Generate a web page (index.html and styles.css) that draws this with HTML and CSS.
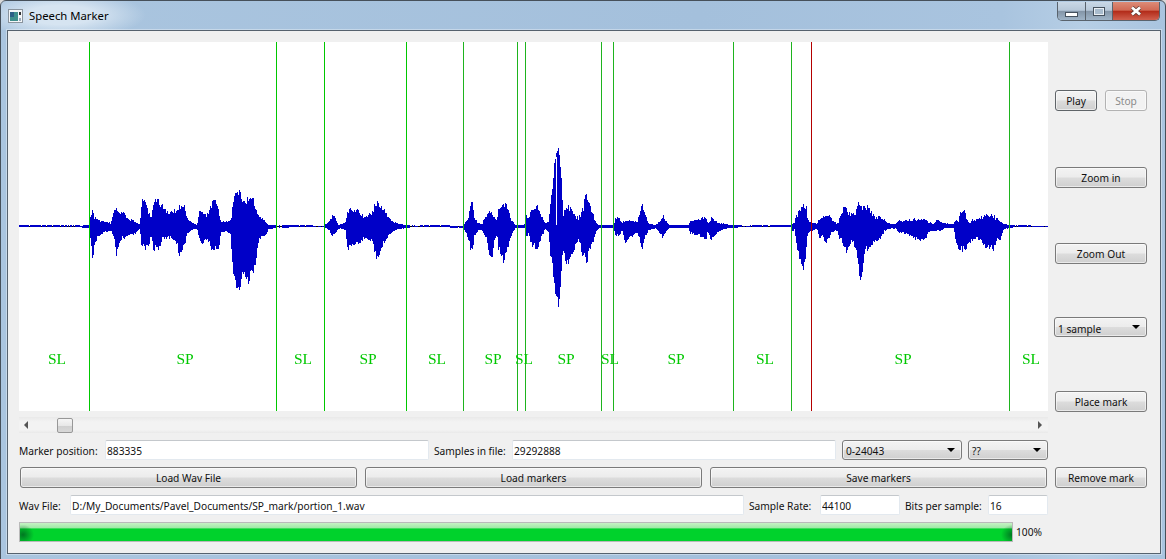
FILE: index.html
```html
<!DOCTYPE html>
<html lang="en">
<head>
    <meta charset="UTF-8">
    <title>Speech Marker</title>
    <link rel="stylesheet" href="styles.css">
</head>
<body>
    <div class="window">
        <div class="titlebar">
            <svg class="app-icon" width="15" height="14" viewBox="0 0 15 14">
                <rect x="0.5" y="0.5" width="14" height="13" fill="#f4f6f8" stroke="#8a949e"/>
                <rect x="2" y="3" width="8" height="9" fill="#3f8f8c"/>
                <rect x="2" y="3" width="4" height="5" fill="#2c5f86"/>
                <rect x="11" y="3" width="2" height="3" fill="#333"/>
                <rect x="11" y="9" width="2" height="3" fill="#9ab"/>
            </svg>
            <span class="title">Speech Marker</span>
            <div class="caption-buttons">
                <div class="cap cap-min"><span class="glyph-min"></span></div>
                <div class="cap cap-max"><span class="glyph-max"></span></div>
                <div class="cap cap-close">
                    <svg width="12" height="10" viewBox="0 0 12 10">
                        <path d="M2 1.5 L10 8.5 M10 1.5 L2 8.5" stroke="#5a3a34" stroke-width="4.2" fill="none"/>
                        <path d="M2 1.5 L10 8.5 M10 1.5 L2 8.5" stroke="#ffffff" stroke-width="2.8" fill="none"/>
                    </svg>
                </div>
            </div>
        </div>

        <div class="client">
            <div class="main">
                <div class="plot" id="plot">
                    <canvas id="wave" width="1029" height="369"></canvas>
                </div>

                <div class="scrollbar">
                    <div class="arrow arrow-left"></div>
                    <div class="thumb"></div>
                    <div class="arrow arrow-right"></div>
                </div>

                <div class="row row-fields">
                    <label class="lbl w-marker">Marker position:</label>
                    <input class="field w-324" type="text" value="883335">
                    <label class="lbl w-samples">Samples in file:</label>
                    <input class="field w-324" type="text" value="29292888">
                    <div class="btn combo w-range">0-24043</div>
                    <div class="btn combo w-qq">??</div>
                </div>

                <div class="row row-buttons">
                    <button class="btn wide">Load Wav File</button>
                    <button class="btn wide">Load markers</button>
                    <button class="btn wide">Save markers</button>
                </div>

                <div class="row row-fields">
                    <label class="lbl w-wav">Wav File:</label>
                    <input class="field w-path" type="text" value="D:/My_Documents/Pavel_Documents/SP_mark/portion_1.wav">
                    <label class="lbl w-rate">Sample Rate:</label>
                    <input class="field w-80" type="text" value="44100">
                    <label class="lbl w-bits">Bits per sample:</label>
                    <input class="field w-60" type="text" value="16">
                </div>

                <div class="row progress-row">
                    <div class="progress"></div>
                    <span class="percent">100%</span>
                </div>
            </div>

            <div class="side">
                <div class="play-stop">
                    <button class="btn play">Play</button>
                    <button class="btn stop" disabled>Stop</button>
                </div>
                <button class="btn zoom-in">Zoom in</button>
                <button class="btn zoom-out">Zoom Out</button>
                <div class="btn combo samples-combo">1 sample</div>
                <button class="btn place">Place mark</button>
                <button class="btn remove">Remove mark</button>
            </div>
        </div>
    </div>

    <script src="wave.js"></script>
</body>
</html>
```

FILE: styles.css
```css
* {
    box-sizing: border-box;
}
html, body {
    margin: 0;
    height: 100%;
    overflow: hidden;
    background-color: #d8d8d8;
}
body {
    font-family: "Noto Sans", "Liberation Sans", sans-serif;
    font-size: 10.2px;
    color: #111;
}
.window {
    width: 1166px;
    height: 562px;
    border: 1px solid #46505a;
    border-radius: 6px 6px 0 0;
    background: linear-gradient(90deg, #aac5df 0%, #a4c0dc 60%, #a9c4df 86%, #b6cee5 93%, #a9c4df 100%);
}

/* title bar */
.titlebar {
    height: 29px;
    display: flex;
    align-items: flex-start;
    background: radial-gradient(ellipse 85px 24px at 60px 14px, #d6e4f1 40%, rgba(214, 228, 241, 0) 100%);
}
.app-icon {
    margin: 8px 0 0 7px;
}
.title {
    margin: 7px 0 0 6px;
    font-size: 11.3px;
    line-height: 16px;
    color: #000;
}
.caption-buttons {
    display: flex;
    height: 19px;
    margin-left: auto;
    margin-right: 5px;
    margin-top: 1px;
    border: 1px solid #59636d;
    border-top: none;
    border-radius: 0 0 5px 5px;
    overflow: hidden;
    width: 103px;
}
.cap {
    display: flex;
    align-items: center;
    justify-content: center;
}
.cap-min, .cap-max {
    width: 28px;
    border-right: 1px solid #59636d;
    background: linear-gradient(#c9d8e6 0%, #b7c8d9 46%, #8496a8 52%, #9fb4c7 100%);
}
.cap-max {
    width: 27px;
}
.cap-close {
    flex: 1;
    background: linear-gradient(#dc8c78 0%, #d16a55 45%, #b32c1a 52%, #d0604e 100%);
}
.glyph-min {
    display: block;
    width: 13px;
    height: 5px;
    margin-top: 7px;
    background: #fff;
    border: 1px solid #46525e;
}
.glyph-max {
    display: block;
    width: 12px;
    height: 9px;
    border: 1px solid #46525e;
    outline: 1px solid rgba(255, 255, 255, 0.75);
    outline-offset: -2px;
    background: #a9bccd;
}

/* client area */
.client {
    width: 1154px;
    height: 524px;
    margin-left: 6px;
    padding: 11px 0 0 11px;
    display: flex;
    background-color: #f0f0f0;
    border: 1px solid #56626e;
    box-shadow: 0 0 0 1px rgba(255, 255, 255, 0.35);
}
.main {
    width: 1029px;
}
.plot {
    position: relative;
    width: 1029px;
    height: 369px;
    background-color: #fff;
}
#wave {
    display: block;
}
.mark-label {
    position: absolute;
    top: 307px;
    font-family: "Liberation Serif", "Times New Roman", serif;
    font-size: 15.5px;
    line-height: 20px;
    color: #00c800;
    transform: translateX(-50%);
}

/* scrollbar under the plot */
.scrollbar {
    height: 16px;
    margin-top: 6px;
    display: flex;
    align-items: center;
    background: linear-gradient(#e9e9e9, #f3f3f3 30%, #f3f3f3 80%, #e9e9e9);
}
.arrow {
    width: 0;
    height: 0;
    border-top: 4px solid transparent;
    border-bottom: 4px solid transparent;
}
.arrow-left {
    margin-left: 5px;
    border-right: 4px solid #555;
}
.arrow-right {
    margin-left: auto;
    margin-right: 6px;
    border-left: 4px solid #555;
}
.thumb {
    width: 16px;
    height: 15px;
    margin: 1px 0 0 29px;
    border: 1px solid #989898;
    border-radius: 2px;
    background: linear-gradient(#f6f6f6, #e8e8e8 50%, #d0d0d0 52%, #d8d8d8);
}

/* form rows */
.row {
    display: flex;
    align-items: center;
    margin-top: 7px;
}
.row-fields {
    height: 20px;
}
.row-buttons {
    height: 21px;
    gap: 8px;
    padding: 0 1px;
}
.lbl {
    flex: none;
    padding-top: 1px;
    white-space: nowrap;
}
.field {
    flex: none;
    height: 20px;
    padding: 1px 1px 0;
    font: inherit;
    color: #111;
    background-color: #fff;
    border: 1px solid #e3e9ef;
    border-top-color: #c4c8cc;
    border-radius: 2px;
    outline: none;
}
.w-marker { width: 86px; }
.w-samples { width: 78px; margin-left: 5px; }
.w-wav { width: 51px; }
.w-rate { width: 71px; margin-left: 5px; }
.w-bits { width: 83px; margin-left: 5px; }
.w-324 { width: 324px; }
.w-path { width: 674px; }
.w-80 { width: 80px; }
.w-60 { width: 60px; }

.btn {
    display: block;
    height: 21px;
    padding: 1px 0 0;
    font: inherit;
    line-height: 18px;
    color: #111;
    text-align: center;
    border: 1px solid #7a7a7a;
    border-radius: 3px;
    background: linear-gradient(#f3f3f3 0%, #ececec 48%, #dcdcdc 52%, #cfcfcf 100%);
    box-shadow: inset 0 0 0 1px rgba(255, 255, 255, 0.55);
}
.wide {
    flex: 1;
}
.combo {
    position: relative;
    height: 20px;
    padding-left: 3px;
    line-height: 18px;
    text-align: left;
}
.combo::after {
    content: "";
    position: absolute;
    top: 7px;
    right: 6px;
    border-top: 4px solid #000;
    border-left: 4px solid transparent;
    border-right: 4px solid transparent;
}
.w-range {
    width: 120px;
    margin-left: 6px;
}
.w-qq {
    width: 80px;
    margin-left: 6px;
}

/* progress */
.progress-row {
    height: 20px;
}
.progress {
    width: 994px;
    height: 20px;
    border: 1px solid #b9b9b9;
    background:
        radial-gradient(ellipse 11px 10px at 3px 65%, rgba(0, 80, 30, 0.7), transparent),
        radial-gradient(ellipse 11px 10px at 100% 65%, rgba(0, 80, 30, 0.7), transparent),
        linear-gradient(#c6f2c4 0%, #9fe9a6 27%, #00d22c 33%, #00d22c 100%);
}
.percent {
    margin-left: 3px;
}

/* right hand buttons */
.side {
    width: 92px;
    margin-left: 7px;
    padding-top: 48px;
    display: flex;
    flex-direction: column;
    gap: 54px;
}
.play-stop {
    display: flex;
    justify-content: space-between;
}
.play, .stop {
    width: 42px;
}
.play {
    border-color: #5f6468;
}
.stop {
    color: #8a8a8a;
    border-color: #b2b2b2;
    background: #f2f2f2;
}
.zoom-in { margin-top: 2px; }
.zoom-out { margin-top: 1px; }
.samples-combo { margin-top: -1px; margin-left: -1px; width: 93px; line-height: 20px; }
.remove { margin-top: 1px; }
```

FILE: wave.js
```js
// Plot origin in the window
const ORIGIN_X = 19;
const ORIGIN_Y = 42;

const MARKERS = [
    [89, '#00c800'], [276, '#00c800'], [324, '#00c800'], [406, '#00c800'],
    [463, '#1eb41e'], [517, '#1eb41e'], [525, '#1eb41e'], [601, '#1eb41e'],
    [613, '#1eb41e'], [733, '#1eb41e'], [791, '#1eb41e'], [811, '#b40000'],
    [1009, '#1eb41e']
];

const LABELS = [
    ['SL', 57], ['SP', 185], ['SL', 303], ['SP', 368], ['SL', 437], ['SP', 493], ['SL', 524],
    ['SP', 566], ['SL', 610], ['SP', 676], ['SL', 765], ['SP', 903], ['SL', 1031]
];

// Envelope of the speech parts: x, top, bottom, read off at 3x scale.
// Each part has its own x/y start.
const PARTS = [
    { x: 80, y: 170, points: [
        [0,167,172],[28,165,175],[30,143,205],[36,118,268],[42,140,232],[50,147,205],[60,152,195],
        [80,155,185],[92,160,182],[95,140,190],[102,122,215],[108,120,255],[115,128,230],[125,122,205],
        [135,138,205],[150,148,195],[165,155,190],[178,163,178],[184,92,235],[194,92,235],[198,110,235],
        [205,125,225],[212,145,200],[218,105,235],[228,90,240],[235,92,245],[245,105,210],[258,128,205],
        [275,125,205],[290,118,225],[296,105,255],[305,105,240],[313,110,225],[320,145,190],[335,158,180],
        [350,165,175],[358,120,210],[365,122,235],[375,135,205],[385,130,215],[395,95,245],[405,93,240],
        [415,120,240],[422,155,185],[440,155,185],[450,150,190],[458,105,305],[464,70,340],[470,60,355],
        [477,65,365],[485,90,310],[495,95,320],[505,80,338],[513,90,300],[520,90,305],[528,110,275],
        [535,140,210],[545,145,200],[555,155,195],[565,165,178],[590,165,173],[733,167,171],[735,163,175],
        [745,155,180],[758,135,200],[765,145,190],[775,165,175],[795,158,180],[802,120,235],[815,115,235],
        [830,118,225],[840,135,215],[855,140,205],[875,125,210],[882,108,240],[890,97,268],[900,105,240],
        [915,125,210],[930,150,190],[950,160,178],[975,165,175],[990,166,172],[1020,167,171]
    ] },
    { x: 450, y: 140, points: [
        [0,257,263],[38,257,263],[45,245,275],[55,230,300],[60,190,330],[66,190,335],[72,235,290],
        [85,250,270],[95,252,270],[100,238,285],[108,230,290],[115,215,350],[125,210,362],[132,230,300],
        [140,245,280],[143,205,320],[155,195,350],[158,187,370],[165,195,350],[175,205,320],[183,240,285],
        [195,255,265],[202,255,263],[225,253,265],[228,225,295],[235,235,280],[242,205,315],[250,205,320],
        [262,200,322],[270,220,300],[285,250,268],[295,245,275],[300,185,350],[306,150,375],[312,75,440],
        [316,50,465],[322,30,485],[326,28,503],[332,95,405],[338,230,330],[345,200,365],[355,197,375],
        [365,215,345],[375,230,320],[385,235,300],[398,205,350],[405,165,350],[408,155,378],[415,180,340],
        [425,215,315],[435,245,280],[445,255,265],[490,255,263],[495,235,285],[505,233,290],[515,250,270],
        [525,235,315],[535,240,295],[550,240,285],[560,250,275],[570,205,305],[576,190,325],[582,215,295],
        [595,250,270],[615,255,265],[628,245,280],[638,225,292],[645,240,280],[655,255,265],[715,255,265],
        [720,240,280],[740,238,285],[760,230,295],[767,228,298],[772,250,272],[782,235,298],[790,238,292],
        [805,248,275],[830,253,265],[850,256,263],[900,257,261]
    ] },
    { x: 780, y: 190, points: [
        [0,106,112],[30,105,112],[36,100,125],[42,100,120],[46,70,150],[50,88,180],[55,60,195],[65,52,225],
        [68,48,242],[72,50,220],[78,50,180],[82,90,130],[95,98,125],[110,100,118],[118,85,150],[125,85,135],
        [135,72,160],[145,72,145],[155,90,125],[170,100,120],[175,95,145],[182,70,150],[190,52,165],[197,52,187],
        [205,68,175],[215,72,150],[225,70,175],[232,45,210],[238,33,278],[245,45,245],[255,45,180],[265,52,180],
        [275,70,160],[285,80,155],[300,80,150],[312,85,125],[320,100,118],[345,102,115],[355,92,130],[370,92,130],
        [385,90,135],[400,88,145],[415,85,150],[425,90,150],[437,90,145],[445,98,125],[460,100,125],[470,90,120],
        [478,95,125],[490,100,115],[520,102,115],[527,80,165],[535,88,175],[543,60,178],[552,65,180],[565,95,165],
        [575,90,150],[590,90,145],[605,80,155],[615,72,170],[630,75,175],[640,78,180],[648,85,150],[660,95,150],
        [670,102,118],[688,105,114],[700,106,112],[804,107,111]
    ] }
];

// small repeatable random so the picture is the same every time
let seed = 12345;
function rand() {
    seed = (seed * 1103515 + 12345) % 2147483647;
    return seed / 2147483647;
}

function buildEnvelope() {
    const env = {};
    PARTS.forEach(part => {
        for (let i = 0; i < part.points.length - 1; i++) {
            const a = part.points[i];
            const b = part.points[i + 1];
            const x0 = part.x + a[0] / 3;
            const x1 = part.x + b[0] / 3;
            for (let x = Math.ceil(x0); x < x1; x++) {
                const t = (x - x0) / (x1 - x0);
                env[x] = [
                    part.y + (a[1] + (b[1] - a[1]) * t) / 3,
                    part.y + (a[2] + (b[2] - a[2]) * t) / 3
                ];
            }
        }
    });
    return env;
}

function drawWave() {
    const ctx = document.getElementById('wave').getContext('2d');
    const env = buildEnvelope();

    // zero line
    ctx.fillStyle = '#000';
    ctx.fillRect(0, 226 - ORIGIN_Y, 1029, 1);

    ctx.fillStyle = '#0000c8';
    for (let x = ORIGIN_X; x < 1048; x++) {
        const e = env[x] || [225.4, 227.2];
        const amp = e[1] - e[0];
        if (amp < 3 && rand() < 0.15) continue;
        // jagged edge: inside the envelope more than outside it
        const jitter = amp > 4 ? Math.min(amp * 0.16, 7) : 0;
        const top = Math.round(e[0] + jitter * (rand() - 0.35));
        const bottom = Math.round(e[1] - jitter * (rand() - 0.35));
        ctx.fillRect(x - ORIGIN_X, top - ORIGIN_Y, 1, bottom - top);
    }

    // white gap in the loudest peak
    ctx.fillStyle = '#fff';
    ctx.fillRect(556 - ORIGIN_X, 157 - ORIGIN_Y, 1, 68);

    MARKERS.forEach(m => {
        ctx.fillStyle = m[1];
        ctx.fillRect(m[0] - ORIGIN_X, 0, 1, 369);
    });
}

function addLabels() {
    const plot = document.getElementById('plot');
    LABELS.forEach(l => {
        const span = document.createElement('span');
        span.className = 'mark-label';
        span.textContent = l[0];
        span.style.left = (l[1] - ORIGIN_X) + 'px';
        plot.appendChild(span);
    });
}

drawWave();
addLabels();
```
